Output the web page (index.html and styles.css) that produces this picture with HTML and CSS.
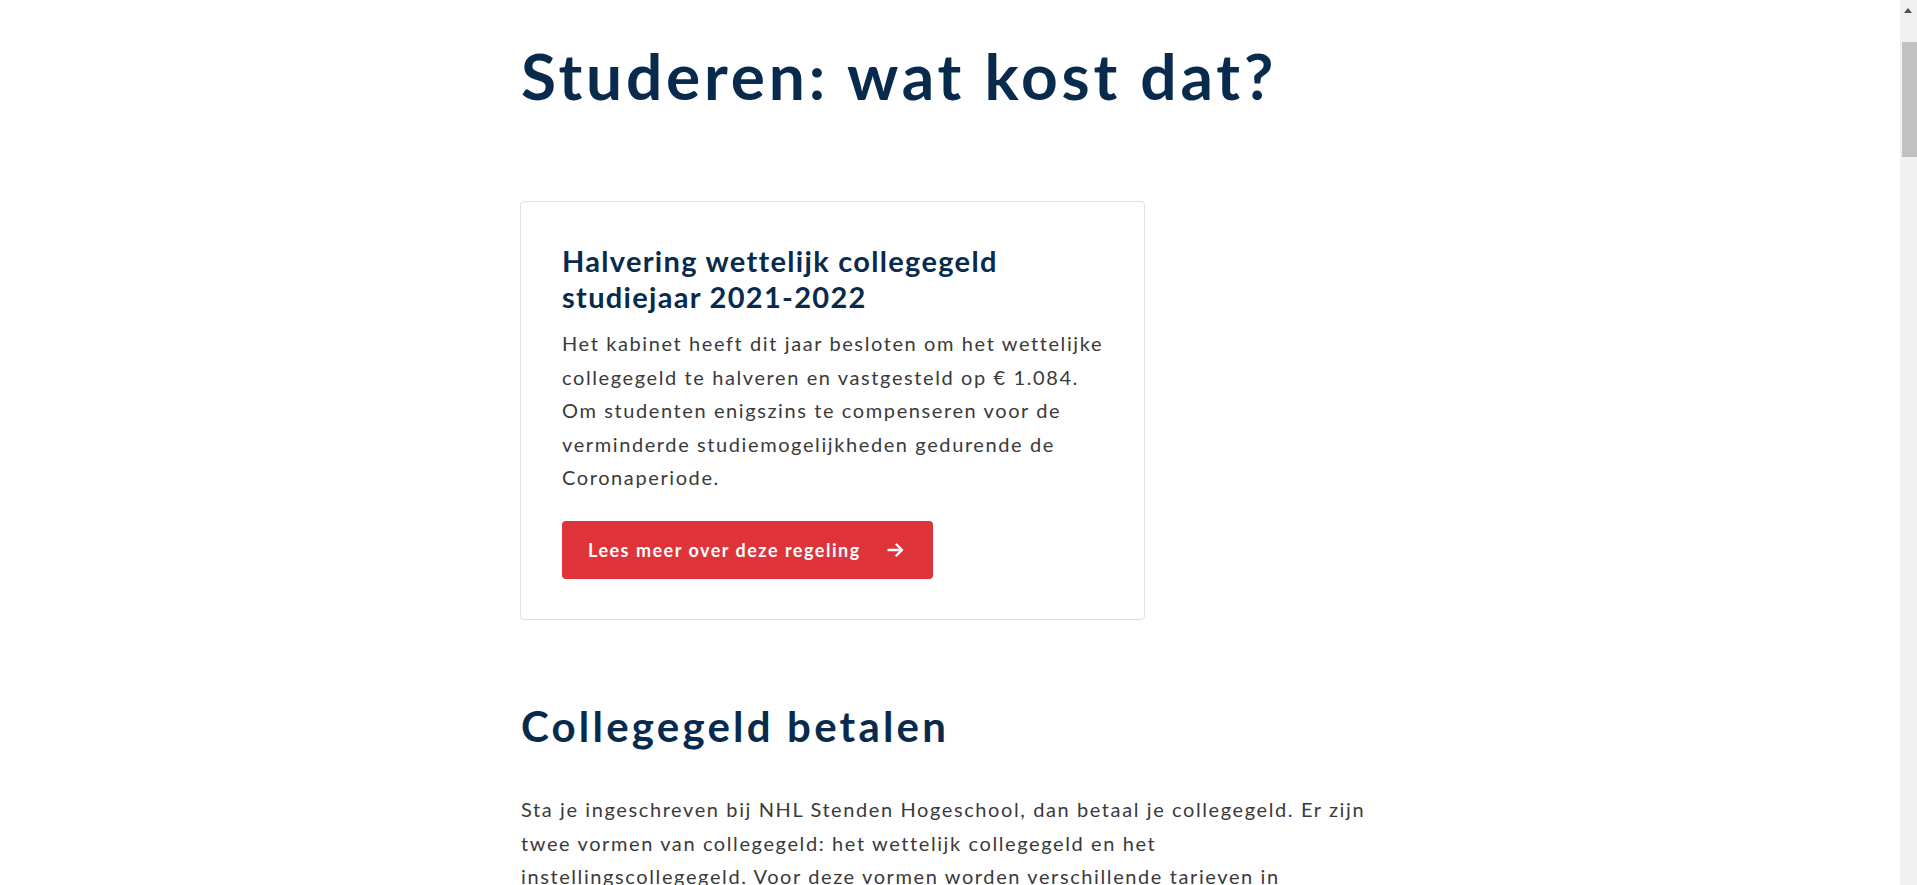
FILE: index.html
```html
<!DOCTYPE html>
<html lang="nl">
<head>
<meta charset="utf-8">
<title>Studeren: wat kost dat?</title>
<link rel="stylesheet" href="styles.css">
</head>
<body>
<main class="page">
  <h1 class="page-title">Studeren: wat kost dat?</h1>

  <section class="notice">
    <h2 class="notice-title">Halvering wettelijk collegegeld studiejaar 2021-2022</h2>
    <p class="notice-text">Het kabinet heeft dit jaar besloten om het wettelijke collegegeld te halveren en vastgesteld op € 1.084. Om studenten enigszins te compenseren voor de verminderde studiemogelijkheden gedurende de Coronaperiode.</p>
    <a class="btn" href="#">
      <span>Lees meer over deze regeling</span>
      <svg class="btn-arrow" width="17" height="14" viewBox="0 0 17 14" aria-hidden="true"><path d="M1.5 7H15M9.5 1.5L15 7l-5.5 5.5" fill="none" stroke="#fff" stroke-width="2.4" stroke-linecap="round" stroke-linejoin="round"/></svg>
    </a>
  </section>

  <h2 class="section-title">Collegegeld betalen</h2>
  <p class="body-text">Sta je ingeschreven bij NHL Stenden Hogeschool, dan betaal je collegegeld. Er zijn twee vormen van collegegeld: het wettelijk collegegeld en het instellingscollegegeld. Voor deze vormen worden verschillende tarieven in rekening gebracht. Welk tarief voor jou geldt, hangt af van je nationaliteit, je vooropleiding en of je al eerder een bachelor- of masterdiploma hebt behaald.</p>
  <p class="body-text">Het collegegeld betaal je via Studielink. Je kunt kiezen om in één keer te betalen of in termijnen via een machtiging.</p>
</main>
<div class="scrollbar" aria-hidden="true">
  <div class="scrollbar-up"></div>
  <div class="scrollbar-thumb"></div>
</div>
</body>
</html>
```

FILE: styles.css
```css
* { box-sizing: border-box; }

html, body {
  margin: 0;
  padding: 0;
  background: #fff;
}

body {
  font-family: Lato, "Noto Sans", sans-serif;
  color: #3a3a3a;
  padding-right: 17px;
}

.page {
  width: 900px;
  margin: 0 auto;
  padding: 37px 0 60px 21px;
}

.page-title {
  margin: 0;
  font-size: 64px;
  line-height: 77px;
  font-weight: 700;
  color: #082a4d;
  letter-spacing: 3.8px;
}

.notice {
  margin-top: 87px;
  margin-left: -1px;
  width: 625px;
  border: 1px solid #e0e0e0;
  border-radius: 4px;
  padding: 41px 27px 40px 41px;
  display: flex;
  flex-direction: column;
  align-items: flex-start;
}

.notice-title {
  margin: 0;
  font-size: 29px;
  line-height: 36px;
  font-weight: 700;
  color: #082a4d;
  letter-spacing: 1.3px;
}

.notice-text {
  margin: 12px 0 0;
  font-size: 20px;
  line-height: 33.6px;
  letter-spacing: 1.6px;
}

.btn {
  margin-top: 26px;
  display: flex;
  align-items: center;
  gap: 26px;
  height: 58px;
  padding: 0 29px 0 26px;
  background: #dd3339;
  border-radius: 4px;
  color: #fff;
  text-decoration: none;
  font-size: 18px;
  font-weight: 700;
  letter-spacing: 1.5px;
}

.btn-arrow { display: block; }

.section-title {
  margin: 81px 0 0;
  font-size: 42px;
  line-height: 50px;
  font-weight: 700;
  color: #082a4d;
  letter-spacing: 3.2px;
}

.body-text {
  max-width: 848px;
  margin: 42px 0 0;
  font-size: 20px;
  line-height: 33.6px;
  letter-spacing: 1.6px;
}

.scrollbar {
  position: fixed;
  top: 0;
  right: 0;
  width: 17px;
  height: 100vh;
  background: #f1f1f1;
}

.scrollbar-up {
  position: absolute;
  top: 8px;
  left: 4px;
  width: 0;
  height: 0;
  border-left: 4.5px solid transparent;
  border-right: 4.5px solid transparent;
  border-bottom: 5px solid #505050;
}

.scrollbar-thumb {
  position: absolute;
  top: 42px;
  left: 2px;
  right: 0;
  height: 115px;
  background: #c1c1c1;
}
```
